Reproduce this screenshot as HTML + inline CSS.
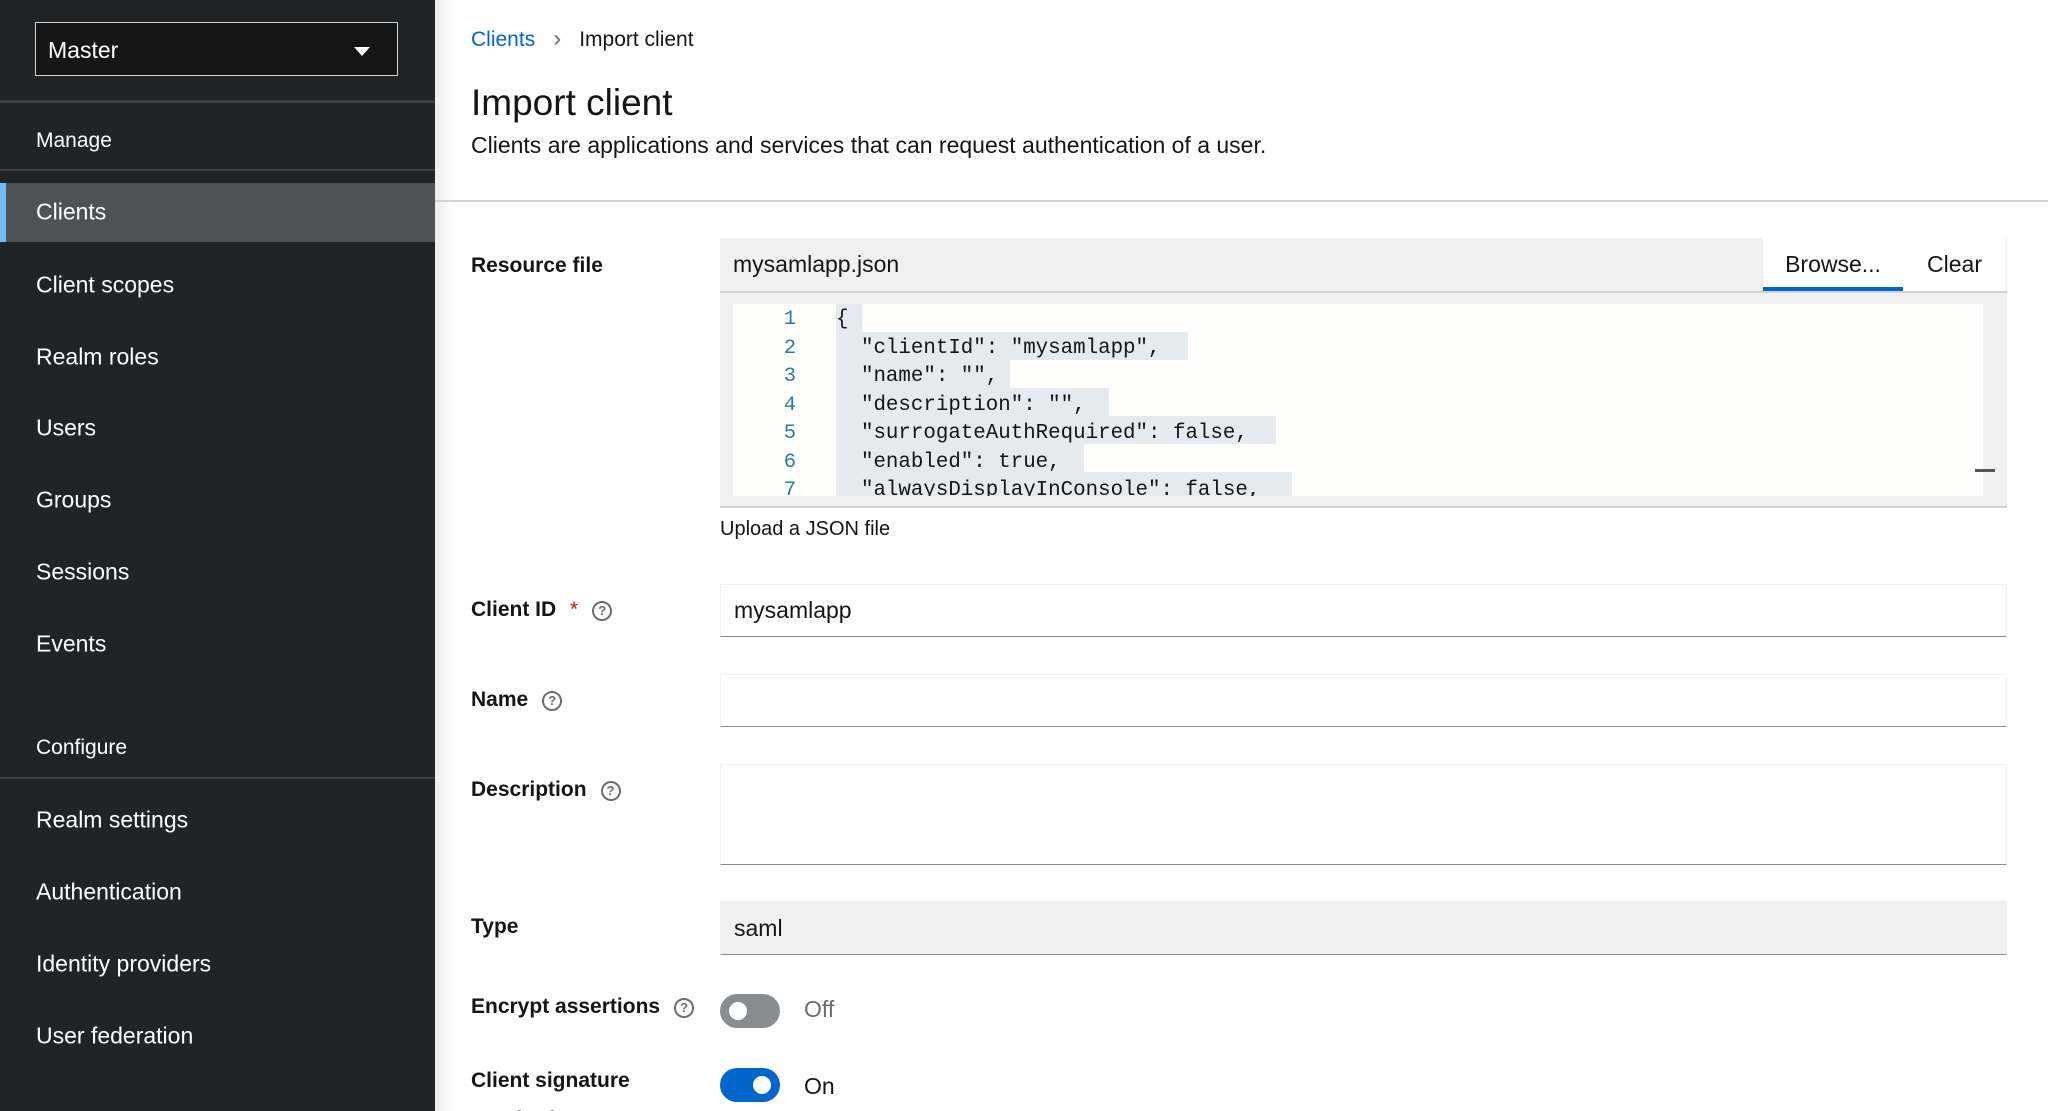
<!DOCTYPE html>
<html style="overflow:hidden;height:1111px"><head><meta charset="utf-8"><style>
*{box-sizing:border-box;margin:0;padding:0}
body{width:2048px;height:1111px;overflow:hidden;font-family:"Liberation Sans",sans-serif;background:#fff;position:relative;color:#151515}
#side{position:absolute;left:0;top:0;width:435px;height:1111px;background:#212427;color:#fff}
.sel{position:absolute;left:35px;top:22px;width:363px;height:54px;background:#151515;border:1px solid #d2d2d2;font-size:23px;padding:14px 12px}
.sel:after{content:"";position:absolute;right:27px;top:24px;border-left:8px solid transparent;border-right:8px solid transparent;border-top:9px solid #fff}
.hr{position:absolute;left:0;width:435px;height:3px;background:#3c3f42}
.nav{position:absolute;left:36px;font-size:23px;color:#fff;transform:translateY(-50%)}
.sec{font-size:21px}
#act{position:absolute;left:0;top:183px;width:435px;height:59px;background:#4f5255;border-left:6px solid #73bcf7}
.abs{position:absolute}
.lbl{position:absolute;left:471px;font-size:21px;font-weight:bold;transform:translateY(-50%)}
.help{display:inline-block;width:20px;height:20px;border:2px solid #6a6e73;border-radius:50%;font-size:13px;text-align:center;line-height:16px;color:#6a6e73;margin-left:14px;vertical-align:1px;font-weight:bold}
.inp{position:absolute;left:720px;width:1287px;background:#fff;border:1px solid #f0f0f0;border-bottom:1px solid #8a8d90;font-size:23px;padding:0 13px;display:flex;align-items:center}
.code{font-family:"Liberation Mono",monospace;font-size:20.8px;position:absolute;white-space:pre}
.ln{position:absolute;width:36px;text-align:right;color:#2b7aa0;font-family:"Liberation Mono",monospace;font-size:20.5px}
.hl{position:absolute;background:#e5e9f0}
.tog{position:absolute;left:720px;width:60px;height:34px;border-radius:17px}
.tog i{position:absolute;top:8px;width:18px;height:18px;border-radius:50%;background:#fff}
</style></head><body>
<div id="side">
<div class="sel">Master</div>
<div class="hr" style="top:100px"></div>
<div class="nav sec" style="top:141px">Manage</div>
<div class="hr" style="top:169px;height:2px"></div>
<div id="act"></div>
<div class="nav" style="top:212px">Clients</div>
<div class="nav" style="top:285px">Client scopes</div>
<div class="nav" style="top:357px">Realm roles</div>
<div class="nav" style="top:428px">Users</div>
<div class="nav" style="top:500px">Groups</div>
<div class="nav" style="top:572px">Sessions</div>
<div class="nav" style="top:644px">Events</div>
<div class="nav sec" style="top:748px">Configure</div>
<div class="hr" style="top:777px;height:2px"></div>
<div class="nav" style="top:820px">Realm settings</div>
<div class="nav" style="top:892px">Authentication</div>
<div class="nav" style="top:964px">Identity providers</div>
<div class="nav" style="top:1036px">User federation</div>
</div>
<div class="abs" style="left:435px;top:0;width:20px;height:1111px;background:linear-gradient(90deg,rgba(0,0,0,.07),rgba(0,0,0,0))"></div>
<div class="abs" style="left:471px;top:28px;font-size:21px"><span style="color:#0066cc">Clients</span><span style="color:#6a6e73;margin:0 18px 0 18px;font-size:24px;line-height:20px">&#x203A;</span>Import client</div>
<div class="abs" style="left:471px;top:82px;font-size:37px">Import client</div>
<div class="abs" style="left:471px;top:132px;font-size:23px">Clients are applications and services that can request authentication of a user.</div>
<div class="abs" style="left:435px;top:200px;width:1613px;height:2px;background:#d2d2d2"></div>

<div class="lbl" style="top:266px">Resource file</div>
<div class="abs" style="left:720px;top:238px;width:1287px;height:53px;background:#f0f0f0;font-size:23px;padding:13px 13px">mysamlapp.json</div>
<div class="abs" style="left:1763px;top:238px;width:140px;height:53px;background:#fff;border-bottom:4px solid #0066cc;font-size:23px;text-align:center;padding-top:13px">Browse...</div>
<div class="abs" style="left:1903px;top:238px;width:104px;height:53px;background:#fff;font-size:23px;text-align:center;padding-top:13px;border-right:1px solid #f0f0f0">Clear</div>
<div class="abs" style="left:720px;top:291px;width:1287px;height:217px;background:#f0f0f0;border-top:2px solid #d2d2d2;border-bottom:2px solid #d2d2d2"></div>
<div class="abs" style="left:733px;top:304px;width:1242px;height:192px;background:#fefefc"></div>
<div class="abs" style="left:1975px;top:304px;width:8px;height:192px;background:#fff"></div>
<div class="abs" style="left:1975px;top:469px;width:20px;height:3px;background:#555"></div>
<div class="abs" style="left:733px;top:304px;width:1242px;height:192px;overflow:hidden">
<div class="hl" style="left:103px;top:0;width:26px;height:28px"></div>
<div class="hl" style="left:103px;top:28px;width:352px;height:28px"></div>
<div class="hl" style="left:103px;top:56px;width:174px;height:28px"></div>
<div class="hl" style="left:103px;top:84px;width:273px;height:28px"></div>
<div class="hl" style="left:103px;top:112px;width:440px;height:28px"></div>
<div class="hl" style="left:103px;top:140px;width:248px;height:28px"></div>
<div class="hl" style="left:103px;top:168px;width:456px;height:28px"></div>
<div class="ln" style="left:27px;top:2px;line-height:28.5px;white-space:pre">1
2
3
4
5
6
7</div>
<div class="code" style="left:103px;top:2px;line-height:28.5px">{
  "clientId": "mysamlapp",
  "name": "",
  "description": "",
  "surrogateAuthRequired": false,
  "enabled": true,
  "alwaysDisplayInConsole": false,</div>
</div>
<div class="abs" style="left:720px;top:518px;font-size:20px">Upload a JSON file</div>

<div class="lbl" style="top:610px">Client ID <span style="color:#c9190b;font-weight:normal;margin-left:8px">*</span><span class="help">?</span></div>
<div class="inp" style="top:584px;height:53px">mysamlapp</div>
<div class="lbl" style="top:700px">Name<span class="help">?</span></div>
<div class="inp" style="top:674px;height:53px"></div>
<div class="lbl" style="top:790px">Description<span class="help">?</span></div>
<div class="inp" style="top:764px;height:101px"></div>
<div class="lbl" style="top:927px">Type</div>
<div class="inp" style="top:901px;height:54px;background:#f0f0f0">saml</div>
<div class="lbl" style="top:1007px">Encrypt assertions<span class="help">?</span></div>
<div class="tog" style="top:994px;background:#8a8d90"><i style="left:9px"></i></div>
<div class="abs" style="left:804px;top:996px;font-size:23px;color:#6a6e73">Off</div>
<div class="lbl" style="top:1081px">Client signature</div>
<div class="lbl" style="top:1120px">required<span class="help">?</span></div>
<div class="tog" style="top:1068px;background:#0066cc"><i style="left:33px"></i></div>
<div class="abs" style="left:804px;top:1073px;font-size:23px">On</div>
</body></html>
